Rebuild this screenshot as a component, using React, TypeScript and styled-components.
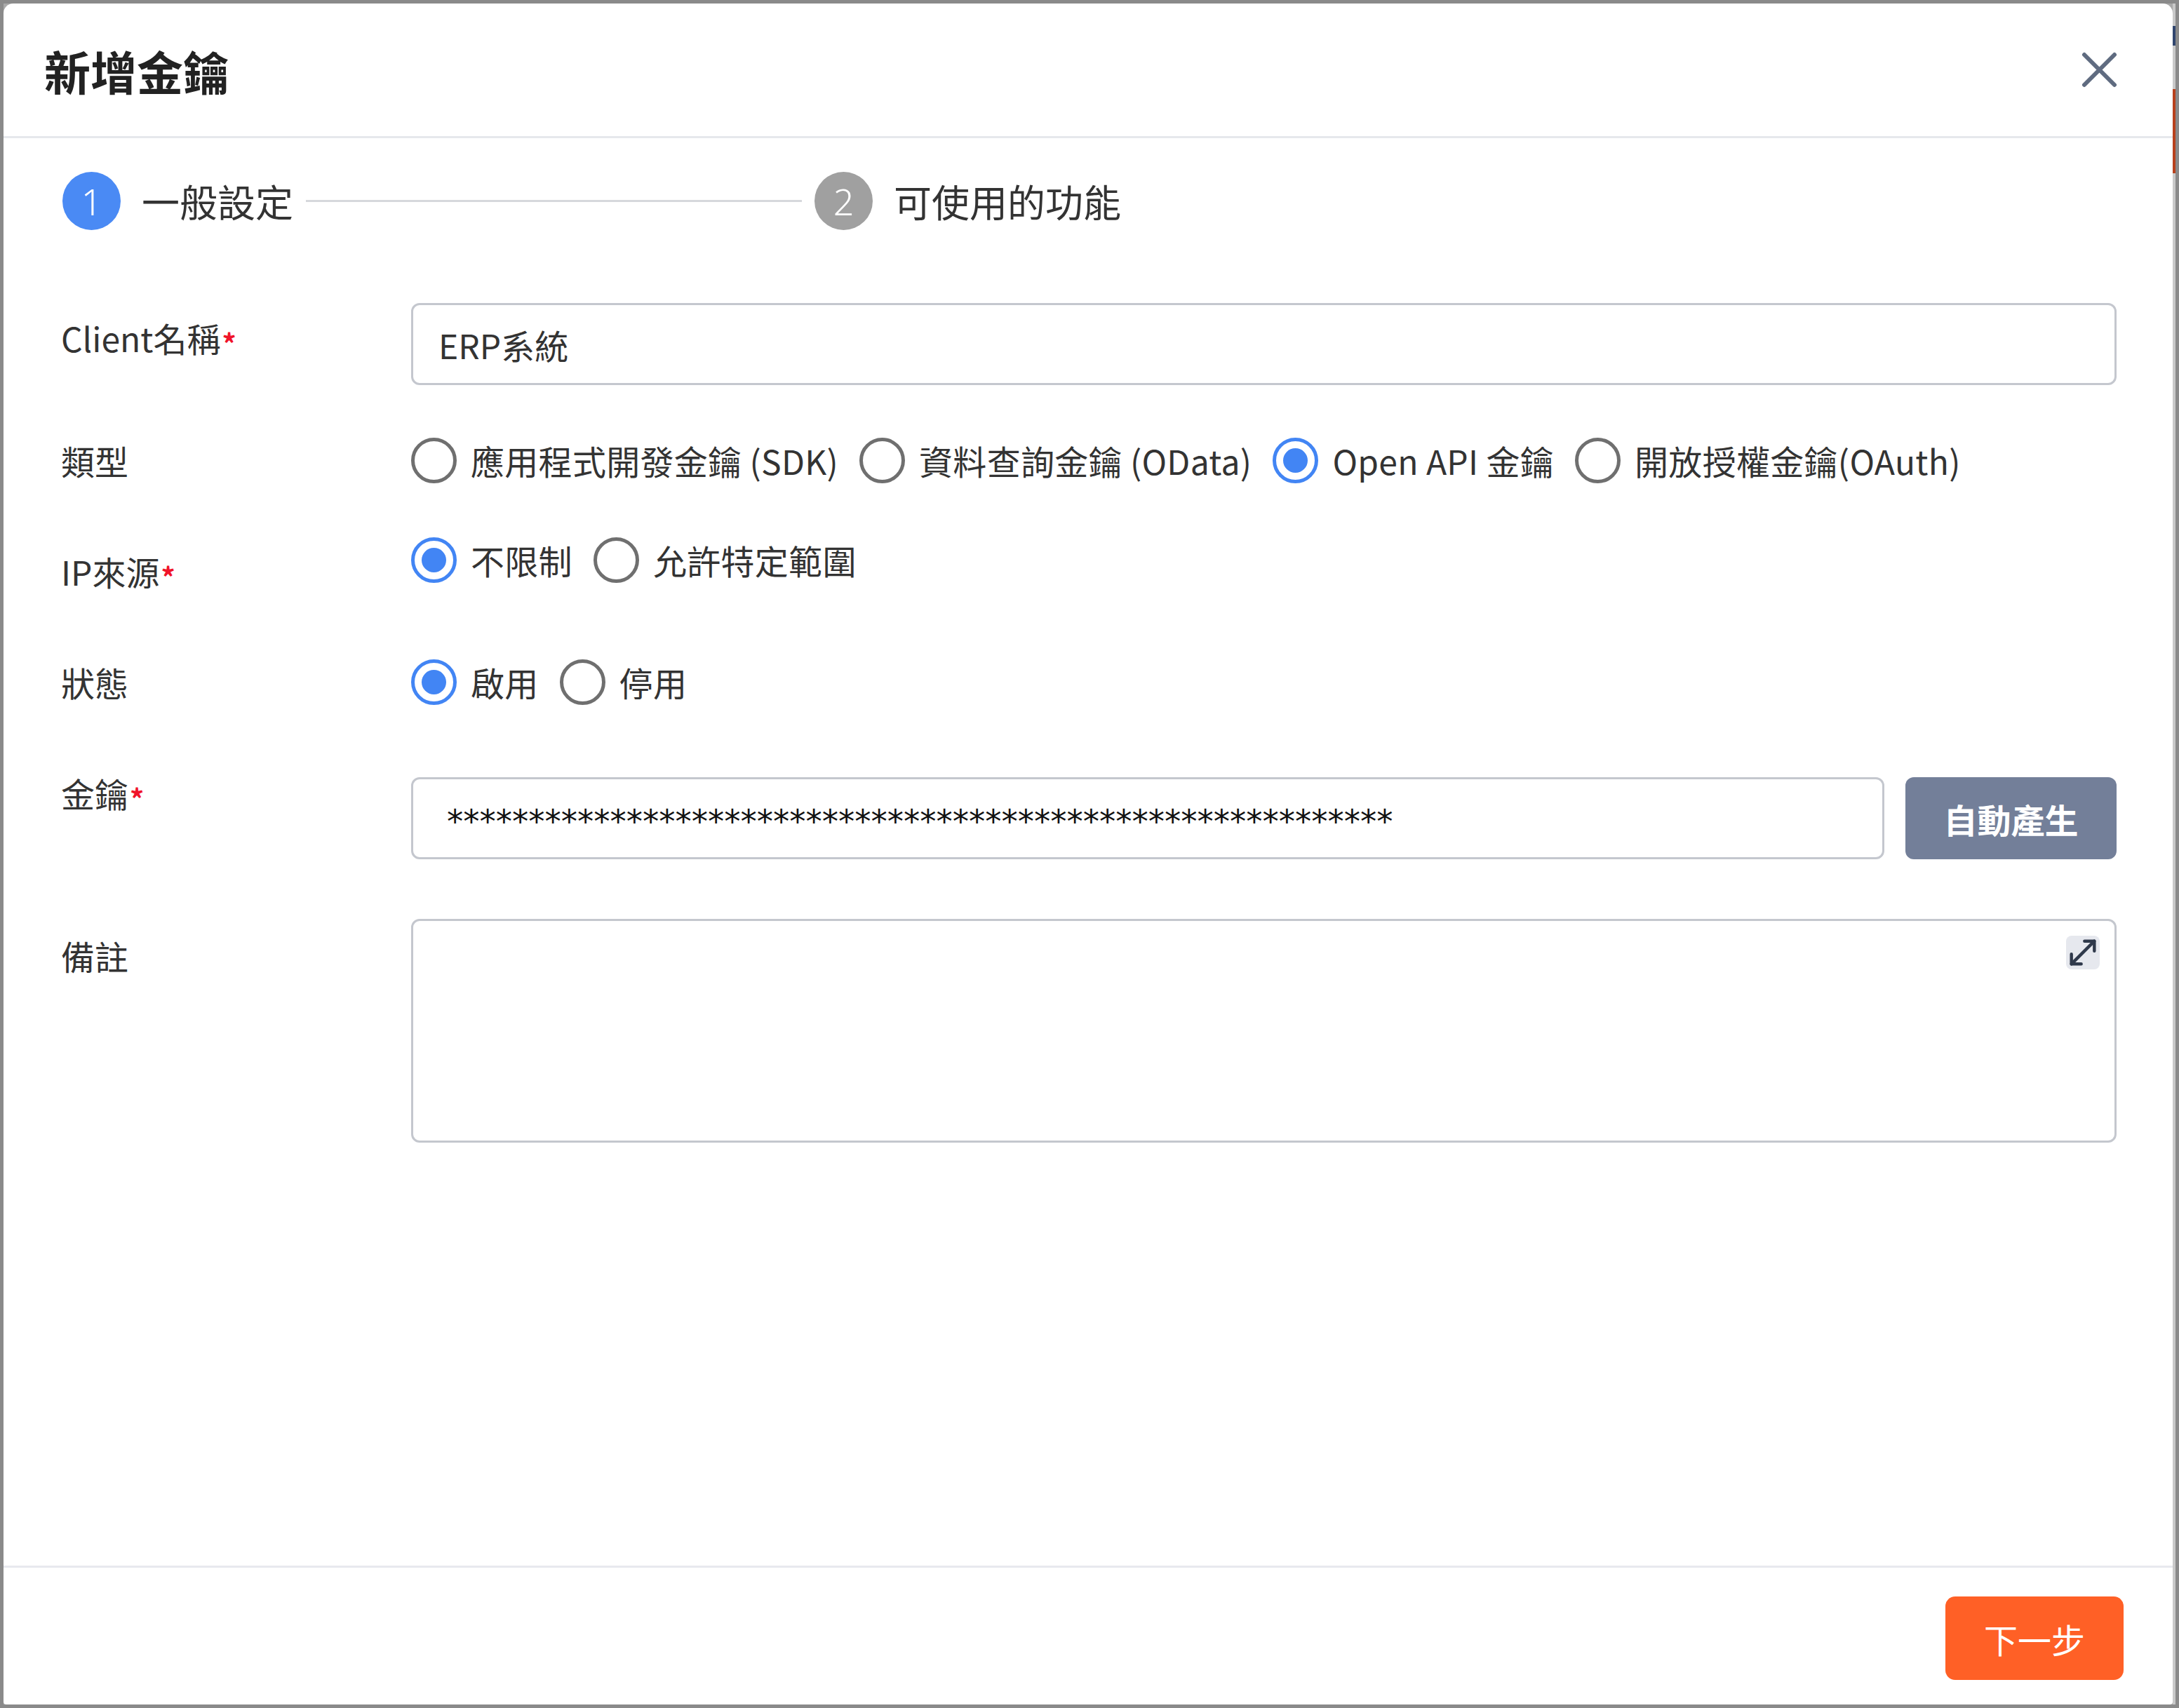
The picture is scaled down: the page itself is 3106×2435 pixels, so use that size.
import styled, { createGlobalStyle } from 'styled-components'
import { MoveDiagonal } from 'lucide-react'

const GlobalStyle = createGlobalStyle`
  html, body {
    margin: 0;
    padding: 0;
    background: #fff;
  }
  body {
    font-family: "Noto Sans CJK TC", "Noto Sans", sans-serif;
    color: #333;
  }
  * {
    box-sizing: border-box;
  }
`

const typeOptions = [
  { label: '應用程式開發金鑰 (SDK)', checked: false },
  { label: '資料查詢金鑰 (OData)', checked: false },
  { label: 'Open API 金鑰', checked: true },
  { label: '開放授權金鑰(OAuth)', checked: false },
]

const ipOptions = [
  { label: '不限制', checked: true },
  { label: '允許特定範圍', checked: false },
]

const statusOptions = [
  { label: '啟用', checked: true },
  { label: '停用', checked: false },
]

const CloseIcon = () => (
  <svg width="51" height="51" viewBox="0 0 51 51" fill="none">
    <path
      d="M4 4 L47 47 M47 4 L4 47"
      stroke="#5f6b80"
      strokeWidth="6"
      strokeLinecap="round"
    />
  </svg>
)

const RadioGroup = ({ options }: { options: { label: string; checked: boolean }[] }) => (
  <Radios>
    {options.map((o) => (
      <RadioItem key={o.label}>
        <RadioDot $checked={o.checked} />
        <span>{o.label}</span>
      </RadioItem>
    ))}
  </Radios>
)

export default function App() {
  return (
    <>
      <GlobalStyle />
      <Frame>
        <Dialog>
          <Header>
            <Title>新增金鑰</Title>
            <CloseButton aria-label="close">
              <CloseIcon />
            </CloseButton>
          </Header>

          <Stepper>
            <Step>
              <StepNumber $active>1</StepNumber>
              <StepLabel>一般設定</StepLabel>
            </Step>
            <Connector />
            <Step>
              <StepNumber>2</StepNumber>
              <StepLabel>可使用的功能</StepLabel>
            </Step>
          </Stepper>

          <Form>
            <Row $gap={104}>
              <Label $shift={16}>
                Client名稱<Required>*</Required>
              </Label>
              <Control>
                <TextInput readOnly value="ERP系統" />
              </Control>
            </Row>

            <Row $gap={74}>
              <Label>類型</Label>
              <Control>
                <RadioGroup options={typeOptions} />
              </Control>
            </Row>

            <Row $gap={76}>
              <Label $shift={16}>
                IP來源<Required>*</Required>
              </Label>
              <Control>
                <RadioGroup options={ipOptions} />
              </Control>
            </Row>

            <Row $gap={88}>
              <Label>狀態</Label>
              <Control>
                <RadioGroup options={statusOptions} />
              </Control>
            </Row>

            <Row $gap={103}>
              <Label $shift={-11}>
                金鑰<Required>*</Required>
              </Label>
              <Control>
                <KeyRow>
                  <KeyInput readOnly value={'*'.repeat(58)} />
                  <GenerateButton>自動產生</GenerateButton>
                </KeyRow>
              </Control>
            </Row>

            <Row $gap={85}>
              <Label $shift={19}>備註</Label>
              <Control>
                <NoteBox>
                  <NoteArea readOnly value="" />
                  <ExpandButton aria-label="expand">
                    <MoveDiagonal size={56} strokeWidth={1.9} color="#2f394b" />
                  </ExpandButton>
                </NoteBox>
              </Control>
            </Row>
          </Form>

          <Footer>
            <NextButton>下一步</NextButton>
          </Footer>
        </Dialog>
        <Peek />
      </Frame>
    </>
  )
}

const Frame = styled.div`
  width: 3106px;
  height: 2435px;
  border: 5px solid #8a8a8a;
  background: #a9a9a9;
  display: flex;
`

const Dialog = styled.div`
  flex: 1;
  display: flex;
  flex-direction: column;
  background: #fff;
  border-radius: 14px 14px 4px 4px;
  overflow: hidden;
`

const Peek = styled.div`
  width: 4px;
  background: linear-gradient(
    to bottom,
    #c9c9c9 0 32px,
    #31466f 32px 60px,
    #c9c9c9 60px 122px,
    #b8411c 122px 242px,
    #c9c9c9 242px
  );
`

const Header = styled.header`
  height: 192px;
  flex-shrink: 0;
  display: flex;
  align-items: center;
  justify-content: space-between;
  padding: 0 79px 0 58px;
  border-bottom: 3px solid #e6e8ec;
`

const Title = styled.h1`
  margin: 0;
  font-size: 66px;
  font-weight: 700;
  color: #222;
  line-height: 1;
`

const CloseButton = styled.button`
  border: none;
  background: none;
  padding: 0;
  display: flex;
  cursor: pointer;
`

const Stepper = styled.div`
  display: flex;
  align-items: center;
  padding: 48px 0 0 84px;
  flex-shrink: 0;
`

const Step = styled.div`
  display: flex;
  align-items: center;
  gap: 30px;
`

const StepNumber = styled.span<{ $active?: boolean }>`
  width: 83px;
  height: 83px;
  border-radius: 50%;
  background: ${(p) => (p.$active ? '#4a8af4' : '#a0a0a0')};
  color: #fff;
  font-family: "Noto Sans", sans-serif;
  font-size: 52px;
  font-weight: 300;
  display: flex;
  align-items: center;
  justify-content: center;
  line-height: 1;
`

const StepLabel = styled.span`
  font-size: 54px;
  color: #333;
  line-height: 1;
`

const Connector = styled.div`
  width: 707px;
  height: 3px;
  background: #d6d8dc;
  margin: 0 18px;
`

const Form = styled.div`
  display: flex;
  flex-direction: column;
  padding: 0 80px 0 82px;
  flex: 1;
`

const Row = styled.div<{ $gap: number }>`
  display: flex;
  align-items: flex-start;
  margin-top: ${(p) => p.$gap}px;
`

const Label = styled.div<{ $shift?: number }>`
  width: 499px;
  flex-shrink: 0;
  margin-top: ${(p) => p.$shift ?? 0}px;
  font-size: 48px;
  line-height: 66px;
  color: #333;
  white-space: nowrap;
`

const Required = styled.span`
  color: #f0142a;
  font-size: 40px;
  font-weight: 700;
  position: relative;
  top: 4px;
  margin-left: 2px;
`

const Control = styled.div`
  flex: 1;
  min-width: 0;
`

const TextInput = styled.input`
  width: 100%;
  height: 117px;
  border: 3px solid #c4c7ce;
  border-radius: 12px;
  padding: 0 36px;
  font-family: "Noto Sans CJK TC", "Noto Sans", sans-serif;
  font-size: 48px;
  color: #333;
  outline: none;
  background: #fff;
`

const Radios = styled.div`
  display: flex;
  align-items: center;
  gap: 30px;
`

const RadioItem = styled.label`
  display: flex;
  align-items: center;
  gap: 20px;
  height: 66px;
  font-size: 48px;
  color: #333;
  white-space: nowrap;
  letter-spacing: 0.3px;
`

const RadioDot = styled.span<{ $checked?: boolean }>`
  width: 65px;
  height: 65px;
  border-radius: 50%;
  border: 5px solid ${(p) => (p.$checked ? '#4285f4' : '#6f6f6f')};
  display: flex;
  align-items: center;
  justify-content: center;
  flex-shrink: 0;

  &::after {
    content: '';
    width: 35px;
    height: 35px;
    border-radius: 50%;
    background: #4285f4;
    display: ${(p) => (p.$checked ? 'block' : 'none')};
  }
`

const KeyRow = styled.div`
  display: flex;
  gap: 30px;
`

const KeyInput = styled(TextInput)`
  flex: 1;
  padding: 8px 48px 0;
  font-family: "DejaVu Sans", sans-serif;
  font-size: 46.5px;
  color: #111;
`

const GenerateButton = styled.button`
  width: 301px;
  height: 117px;
  border: none;
  border-radius: 12px;
  background: #737f99;
  color: #fff;
  font-family: "Noto Sans CJK TC", sans-serif;
  font-size: 48px;
  font-weight: 700;
  cursor: pointer;
`

const NoteBox = styled.div`
  position: relative;
  height: 319px;
`

const NoteArea = styled.textarea`
  width: 100%;
  height: 100%;
  border: 3px solid #c4c7ce;
  border-radius: 12px;
  padding: 24px 36px;
  font-family: "Noto Sans CJK TC", sans-serif;
  font-size: 48px;
  resize: none;
  outline: none;
`

const ExpandButton = styled.span`
  position: absolute;
  top: 24px;
  right: 24px;
  width: 48px;
  height: 48px;
  border-radius: 8px;
  background: #e6e8ee;
  display: flex;
  align-items: center;
  justify-content: center;
  overflow: visible;

  svg {
    flex-shrink: 0;
  }
`

const Footer = styled.footer`
  flex-shrink: 0;
  display: flex;
  justify-content: flex-end;
  padding: 41px 70px 35px;
  border-top: 3px solid #e8e9ee;
`

const NextButton = styled.button`
  width: 254px;
  height: 119px;
  border: none;
  border-radius: 14px;
  background: #ff6026;
  color: #fff;
  font-family: "Noto Sans CJK TC", sans-serif;
  font-size: 48px;
  cursor: pointer;
`
